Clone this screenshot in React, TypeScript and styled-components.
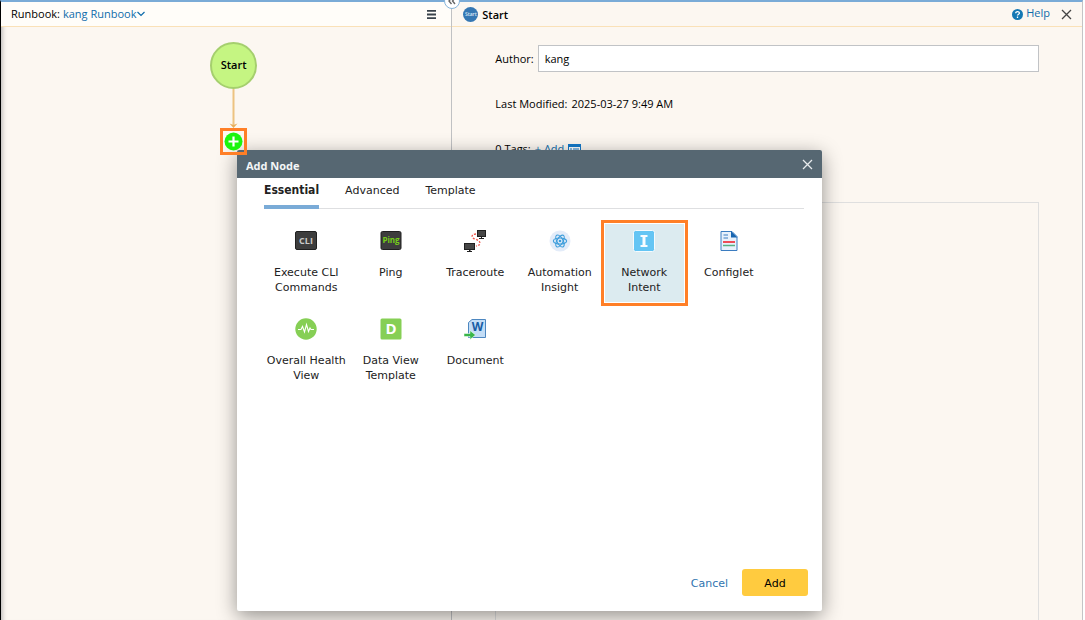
import React, { useState } from 'react';
import styled, { createGlobalStyle, css } from 'styled-components';

const body = '"Open Sans", "Noto Sans", sans-serif';
const dialogFont = '"DejaVu Sans", Verdana, sans-serif';

const GlobalStyle = createGlobalStyle`
  *, *::before, *::after { box-sizing: border-box; }
  body { margin: 0; background: #fff; color: #000; font: 11px/16px ${body}; }
  button, input { font: inherit; color: inherit; margin: 0; }
  button { background: none; border: 0; padding: 0; cursor: pointer; }
  a { color: #0f6cab; text-decoration: none; }
  svg { display: block; flex: none; }
`;

const Page = styled.div`
  position: relative;
  display: grid;
  grid-template-columns: 167fr 233fr;
  min-height: 100vh;
  margin-right: 2px;
  background: #fcf7f1;
  border-top: 2px solid #7aabd7;
  border-left: 1px solid #000;
  border-right: 1px solid #c4c4c6;
`;

const Pane = styled.section`
  position: relative;
  display: flex;
  flex-direction: column;
  min-width: 0;
`;

const RunbookPane = styled(Pane)`
  border-right: 1px solid #c0c1c3;
  box-shadow: inset 6px 0 5px -5px rgba(60, 60, 70, 0.4);
`;

const PaneHeader = styled.header<{ $light?: boolean }>`
  display: flex;
  align-items: center;
  height: 25px;
  padding: 0 10px;
  gap: 3px;
  background: ${(p) => (p.$light ? '#fffdf9' : 'transparent')};
  border-bottom: 1px solid #fae1b8;
`;

const Spacer = styled.span`
  flex: 1;
`;

const RunbookLink = styled.a`
  display: flex;
  align-items: center;
  gap: 1px;
`;

const IconButton = styled.button`
  display: flex;
  align-items: center;
  justify-content: center;
`;

const MenuButton = styled(IconButton)`
  padding: 0 5px;
`;

const PaneTitle = styled.h2`
  margin: 0;
  padding-top: 2px;
  font-size: 11px;
  font-weight: 600;
`;

const StartBadge = styled.span`
  width: 15px;
  height: 15px;
  margin: 0 1px;
  border-radius: 50%;
  background: #3577b3;
  color: #dbe8f4;
  font-size: 5px;
  font-weight: 600;
  line-height: 14px;
  text-align: center;
`;

const HelpLink = styled.a`
  display: flex;
  align-items: center;
  gap: 3px;
  margin-right: 8px;
`;

const HelpText = styled.span`
  padding-bottom: 2px;
`;

const Collapse = styled.button`
  position: absolute;
  top: -9px;
  right: -9px;
  display: flex;
  align-items: center;
  justify-content: center;
  width: 16px;
  height: 16px;
  border: 1px solid #85b4da;
  border-radius: 50%;
  background: #fff;
  z-index: 1;
`;

const Canvas = styled.div`
  display: flex;
  flex-direction: column;
  align-items: center;
  padding: 15px 0 0 15px;
`;

const StartNode = styled.button`
  width: 47px;
  height: 47px;
  padding-bottom: 2px;
  border: 2px solid #a5cf6e;
  border-radius: 50%;
  background: #c5f582;
  font-weight: 600;
`;

const AddNodeButton = styled(IconButton)`
  position: relative;
  z-index: 3;
  width: 27px;
  height: 27px;
  border: 3px solid #ff7f27;
`;

const Form = styled.form`
  display: flex;
  flex: 1;
  flex-direction: column;
  padding: 18px 43px 0;
`;

const Field = styled.div<{ $gap: number }>`
  display: flex;
  align-items: center;
  gap: 4px;
  margin-bottom: ${(p) => p.$gap}px;
`;

const TextInput = styled.input`
  flex: 1;
  min-width: 0;
  height: 27px;
  padding: 0 6px;
  border: 1px solid #c1c3c6;
  border-radius: 0;
  background: #fff;
  outline: 0;
`;

const AddTag = styled.a`
  display: flex;
  align-items: center;
  gap: 4px;
`;

const NotesBox = styled.div`
  flex: 1;
  border: 1px solid #dfdfdf;
  border-bottom: 0;
`;

const Dialog = styled.div`
  position: absolute;
  top: 148px;
  left: 236px;
  z-index: 2;
  display: flex;
  flex-direction: column;
  width: 585px;
  max-width: calc(100% - 236px);
  min-height: 461px;
  border-radius: 2px;
  background: #fff;
  color: #222;
  font: 11px/15px ${dialogFont};
  box-shadow: 0 5px 20px rgba(0, 0, 0, 0.42);
`;

const DialogHeader = styled.header`
  display: flex;
  align-items: center;
  justify-content: space-between;
  height: 28px;
  padding: 0 9px;
  border-radius: 2px 2px 0 0;
  background: #566772;
  color: #f4f6f7;
`;

const DialogTitle = styled.h1`
  margin: 2px 0 0;
  font: 700 11px/15px ${body};
`;

const Tabs = styled.div`
  display: flex;
  gap: 26px;
  height: 31px;
  margin: 0 18px 0 27px;
  border-bottom: 1px solid #dedfe1;
`;

const Tab = styled.button<{ $active: boolean }>`
  height: 31px;
  padding-bottom: 3px;
  border-bottom: 4px solid transparent;
  ${(p) =>
    p.$active &&
    css`
      border-color: #7aabd7;
      font-family: 'DejaVu Sans Condensed', ${dialogFont};
      font-size: 12px;
      font-weight: 700;
    `}
`;

const Tiles = styled.div`
  display: grid;
  grid-template-columns: repeat(6, 1fr);
  grid-auto-rows: 84px;
  row-gap: 4px;
  padding: 12px 51px 0 27px;
`;

const Tile = styled.button<{ $selected: boolean }>`
  display: flex;
  flex-direction: column;
  align-items: center;
  gap: 13px;
  padding-top: 9px;
  line-height: 15px;
  white-space: nowrap;
  ${(p) =>
    p.$selected &&
    css`
      background: #dcebf0;
      box-shadow: inset 0 0 0 3px #fff;
      outline: 3px solid #ff7f27;
      outline-offset: -2px;
    `}
`;

const DialogFooter = styled.footer`
  display: flex;
  align-items: center;
  justify-content: flex-end;
  gap: 14px;
  margin-top: auto;
  padding: 0 14px 15px;
`;

const CancelButton = styled.button`
  padding-top: 1px;
  color: #2f74b0;
`;

const PrimaryButton = styled.button`
  width: 66px;
  height: 27px;
  padding-top: 1px;
  border-radius: 3px;
  background: #ffcb3f;
  color: #000;
`;

const CloseIcon = ({ color }: { color: string }) => (
  <svg width="11" height="11" viewBox="0 0 11 11" stroke={color} strokeWidth="1.3">
    <path d="M1 1L10 10M10 1L1 10" />
  </svg>
);

const terminalText = { fontFamily: '"Open Sans", sans-serif', textAnchor: 'middle' as const };

const icons: Record<string, React.ReactNode> = {
  cli: (
    <svg width="22" height="22" viewBox="0 0 22 22">
      <rect x=".5" y="1.5" width="21" height="18" rx="1.5" fill="#3d3d3d" stroke="#202020" />
      <text x="11" y="14" fontSize="9" fontWeight="700" fill="#c9c9c9" {...terminalText}>CLI</text>
    </svg>
  ),
  ping: (
    <svg width="22" height="22" viewBox="0 0 22 22">
      <rect x="1" y="1.5" width="20" height="18" rx="1.5" fill="#3d3d3d" stroke="#202020" />
      <text x="11" y="13" fontSize="8" fontWeight="700" fill="#76cf19" {...terminalText}>Ping</text>
    </svg>
  ),
  traceroute: (
    <svg width="22" height="22" viewBox="0 0 22 22">
      <path d="M12 4C7 4 7 8 11 9C17 11 18 15 12 16" fill="none" stroke="#f0544a" strokeWidth="1.3" strokeDasharray="2 1.4" />
      <g fill="#464646" stroke="#202020">
        <rect x="13.5" y=".5" width="8" height="6" />
        <rect x=".5" y="13.5" width="10" height="6" />
      </g>
      <path d="M17 7h1v1h2v1h-5V8h2zM5 20h1.500v1H8v1H3v-1h2z" fill="#202020" />
    </svg>
  ),
  insight: (
    <svg width="22" height="22" viewBox="0 0 22 22">
      <circle cx="11" cy="11" r="10.500" fill="#e3ecf9" />
      <g fill="none" stroke="#3d9ddb" strokeWidth="1.200">
        <ellipse cx="11" cy="11" rx="3" ry="6.600" transform="rotate(30 11 11)" />
        <ellipse cx="11" cy="11" rx="3" ry="6.600" transform="rotate(90 11 11)" />
        <ellipse cx="11" cy="11" rx="3" ry="6.600" transform="rotate(150 11 11)" />
      </g>
      <circle cx="11" cy="11" r="1.300" fill="#3d9ddb" />
    </svg>
  ),
  intent: (
    <svg width="22" height="22" viewBox="0 0 22 22">
      <rect x=".5" y=".5" width="21" height="21" rx="2" fill="#64c5f4" stroke="#f5fbfe" />
      <path d="M7.500 5H14.500V7H12.500V15H14.500V17H7.500V15H9.500V7H7.500Z" fill="#f8fcff" />
    </svg>
  ),
  configlet: (
    <svg width="22" height="22" viewBox="0 0 22 22">
      <path d="M3 1.500H14L19 6.500V20.500H3Z" fill="#e8f1fb" stroke="#3b7cc0" />
      <path d="M13 1L19.500 7.500H13Z" fill="#1966b1" />
      <path d="M5.500 5H10M5.500 8H10" stroke="#3b7cc0" />
      <path d="M5 12H17" stroke="#ee4c56" strokeWidth="2" />
      <path d="M5 15.500H17" stroke="#57b083" strokeWidth="1.500" />
    </svg>
  ),
  health: (
    <svg width="22" height="22" viewBox="0 0 22 22">
      <circle cx="11" cy="11" r="10.700" fill="#86cf55" />
      <path d="M3 11.500H6L7.500 8.500L9.500 14L11.500 6.500L13.500 13.500L15 10L16 11.500H19" fill="none" stroke="#fff" strokeWidth="1.100" />
    </svg>
  ),
  dataView: (
    <svg width="22" height="22" viewBox="0 0 22 22">
      <rect x=".5" y=".5" width="21" height="21" rx="1.500" fill="#86cf55" />
      <text x="11" y="16" fontSize="15" fontWeight="700" fill="#fff" {...terminalText}>D</text>
    </svg>
  ),
  document: (
    <svg width="22" height="22" viewBox="0 0 22 22">
      <path d="M8 1.500H21.500V19.500H4.500V4.500Z" fill="#c3ddf6" stroke="#4d87c0" />
      <text x="13.500" y="13" fontSize="12" fontWeight="700" fill="#175ca4" {...terminalText}>W</text>
      <path d="M0 15.500H6V12.500L11.500 17L6 21.500V18.500H0Z" fill="#38b649" stroke="#fff" strokeWidth=".5" />
    </svg>
  ),
};

const nodes = [
  { icon: 'cli', lines: ['Execute CLI', 'Commands'] },
  { icon: 'ping', lines: ['Ping'] },
  { icon: 'traceroute', lines: ['Traceroute'] },
  { icon: 'insight', lines: ['Automation', 'Insight'] },
  { icon: 'intent', lines: ['Network', 'Intent'] },
  { icon: 'configlet', lines: ['Configlet'] },
  { icon: 'health', lines: ['Overall Health', 'View'] },
  { icon: 'dataView', lines: ['Data View', 'Template'] },
  { icon: 'document', lines: ['Document'] },
];

export default function App() {
  const [tab, setTab] = useState('Essential');
  const [selected, setSelected] = useState('intent');

  return (
    <>
      <GlobalStyle />
      <Page>
        <RunbookPane>
          <PaneHeader $light>
            <span>Runbook:</span>
            <RunbookLink href="#runbook">
              kang Runbook
              <svg width="8" height="6" viewBox="0 0 8 6" fill="none" stroke="#0f6cab" strokeWidth="1.200">
                <path d="M.5 1L4 4.500L7.500 1" />
              </svg>
            </RunbookLink>
            <Spacer />
            <MenuButton aria-label="Menu">
              <svg width="9" height="9" viewBox="0 0 9 9" fill="#39424b">
                <path d="M0 0H9V1.700H0ZM0 3.600H9V5.400H0ZM0 7.300H9V9H0Z" />
              </svg>
            </MenuButton>
          </PaneHeader>
          <Collapse aria-label="Collapse panel">
            <svg width="8" height="8" viewBox="0 0 8 8" fill="none" stroke="#666" strokeWidth="1.400">
              <path d="M3.500 1L1 4L3.500 7M7 1L4.500 4L7 7" />
            </svg>
          </Collapse>
          <Canvas>
            <StartNode>Start</StartNode>
            <svg width="9" height="39" viewBox="0 0 9 39">
              <path d="M4.500 0V37" stroke="#edc381" strokeWidth="2" />
              <path d="M.5 34.500L4.500 36L8.500 34.500L4.500 39Z" fill="#e8ae5b" />
            </svg>
            <AddNodeButton aria-label="Add node">
              <svg width="19" height="19" viewBox="0 0 19 19">
                <circle cx="9.500" cy="9.500" r="9" fill="#1cf50e" />
                <path d="M9.500 4.500V14.500M4.500 9.500H14.500" stroke="#fff" strokeWidth="2.200" />
              </svg>
            </AddNodeButton>
          </Canvas>
        </RunbookPane>

        <Pane>
          <PaneHeader>
            <StartBadge aria-hidden="true">Start</StartBadge>
            <PaneTitle>Start</PaneTitle>
            <Spacer />
            <HelpLink href="#help">
              <svg width="11" height="11" viewBox="0 0 11 11">
                <circle cx="5.500" cy="5.500" r="5.500" fill="#1478b4" />
                <path d="M3.700 4.200C3.700 2 7.400 2 7.400 4.200C7.400 5.300 5.500 5.300 5.500 6.600M5.500 7.600V9" fill="none" stroke="#fff" strokeWidth="1.300" />
              </svg>
              <HelpText>Help</HelpText>
            </HelpLink>
            <IconButton aria-label="Close panel">
              <CloseIcon color="#444" />
            </IconButton>
          </PaneHeader>
          <Form onSubmit={(e) => e.preventDefault()}>
            <Field $gap={24}>
              <label htmlFor="author">Author:</label>
              <TextInput id="author" defaultValue="kang" />
            </Field>
            <Field $gap={29}>
              <span>Last Modified:</span>
              <span>2025-03-27 9:49 AM</span>
            </Field>
            <Field $gap={45}>
              <span>0 Tags:</span>
              <AddTag href="#add-tag">
                + Add
                <svg width="13" height="11" viewBox="0 0 13 11">
                  <rect x=".5" y=".5" width="12" height="10" fill="#fff" stroke="#1478c8" />
                  <path d="M0 0H13V3H0Z" fill="#1478c8" />
                  <path d="M2 5H4M5 5H11M2 8H4M5 8H11" stroke="#1478c8" />
                </svg>
              </AddTag>
            </Field>
            <NotesBox />
          </Form>
        </Pane>

        <Dialog role="dialog" aria-labelledby="dialog-title">
          <DialogHeader>
            <DialogTitle id="dialog-title">Add Node</DialogTitle>
            <IconButton aria-label="Close dialog">
              <CloseIcon color="#e8ebed" />
            </IconButton>
          </DialogHeader>
          <Tabs role="tablist">
            {['Essential', 'Advanced', 'Template'].map((name) => (
              <Tab key={name} role="tab" aria-selected={tab === name} $active={tab === name} onClick={() => setTab(name)}>
                {name}
              </Tab>
            ))}
          </Tabs>
          <Tiles>
            {nodes.map(({ icon, lines }) => (
              <Tile key={icon} $selected={selected === icon} onClick={() => setSelected(icon)}>
                {icons[icon]}
                <span>
                  {lines[0]}
                  {lines[1] && <br />}
                  {lines[1]}
                </span>
              </Tile>
            ))}
          </Tiles>
          <DialogFooter>
            <CancelButton>Cancel</CancelButton>
            <PrimaryButton>Add</PrimaryButton>
          </DialogFooter>
        </Dialog>
      </Page>
    </>
  );
}
